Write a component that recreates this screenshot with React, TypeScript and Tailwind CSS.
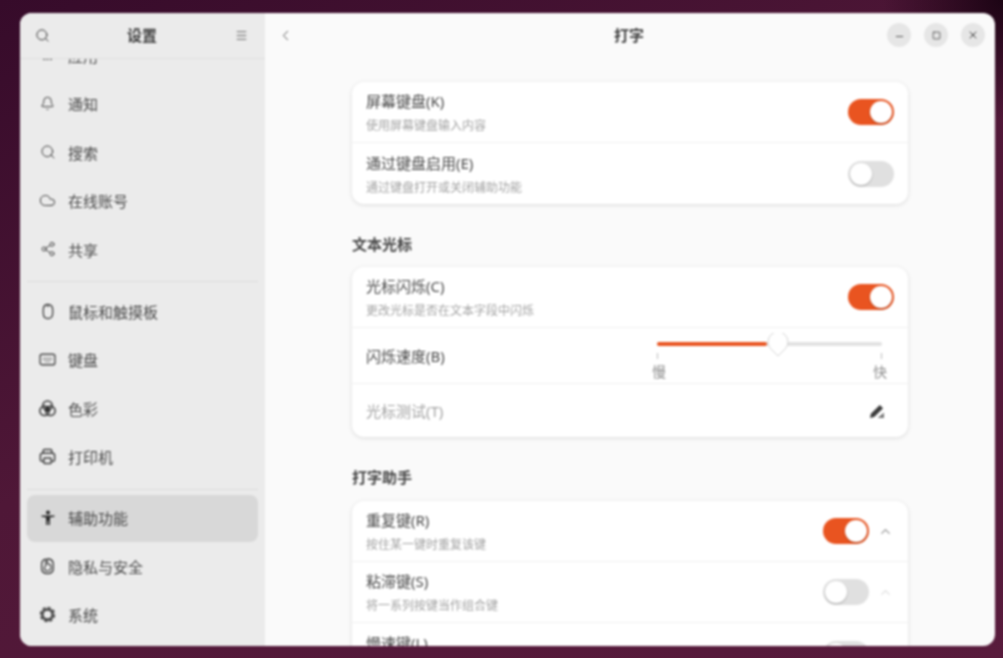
import { Bell, ChevronLeft, ChevronUp, Cloud, Menu, Minus, Search, Share2, Square, X } from "lucide-react";
import type { ReactNode } from "react";

function ColorIcon() {
    return (
        <svg width="17" height="17" viewBox="0 0 16 16" fill="none" stroke="#3d3d3d" strokeWidth="1.5">
            <circle cx="8" cy="5.4" r="4.4" />
            <circle cx="5.2" cy="10.2" r="4.4" />
            <circle cx="10.8" cy="10.2" r="4.4" />
            <path d="M8 5.6l3 2.2-1 3.4H6l-1-3.4z" fill="#333333" stroke="none" />
        </svg>
    );
}

function PersonIcon() {
    return (
        <svg width="16" height="16" viewBox="0 0 16 16" fill="#2a2a2a">
            <circle cx="8" cy="2.6" r="2" />
            <path d="M1.5 5.4h13v1.4L10 7.6V15H8.500v-4h-1v4H6V7.600L1.500 6.800z" />
        </svg>
    );
}

function MouseIcon() {
    return (
        <svg width="16" height="17" viewBox="0 0 16 16" fill="none" stroke="#404040" strokeWidth="1.3">
            <path d="M8 1c-3.2 0-4.700 2.200-4.700 5.200v3.200c0 3.400 1.600 5.600 4.700 5.600s4.700-2.200 4.700-5.600V6.200C12.700 3.200 11.200 1 8 1z" />
            <path d="M8 1v2.500" />
        </svg>
    );
}

function KeyboardIcon() {
    return (
        <svg width="17" height="17" viewBox="0 0 16 16" fill="none" stroke="#484848">
            <rect x="1" y="3" width="14" height="10" rx="2" strokeWidth="1.3" />
            <path d="M3.500 6.500h9M3.500 8.200h9M5.500 10.200h5" stroke="#9a9a9a" strokeWidth="1" />
        </svg>
    );
}

function PrinterIcon() {
    return (
        <svg width="17" height="17" viewBox="0 0 16 16" fill="none" stroke="#404040" strokeWidth="1.4">
            <path d="M4 5V2.500C4 2 4.400 1.500 5 1.500h6c.6 0 1 .5 1 1V5" />
            <path d="M4 12.500H2.800c-.9 0-1.500-.6-1.500-1.500V7c0-1.200.8-2 2-2h9.400c1.200 0 2 .8 2 2v4c0 .9-.6 1.500-1.500 1.500H12" />
            <rect x="4.500" y="9.500" width="7" height="5" rx=".8" />
        </svg>
    );
}

function HandIcon() {
    return (
        <svg width="17" height="18" viewBox="0 0 16 16" fill="none" stroke="#404040" strokeWidth="1.3">
            <path d="M6 1.600C3.800 2.300 2.500 4 2.500 6.500v3.500c0 3.200 2.200 5 5.500 5s5.500-1.800 5.500-5V6.500C13.500 3.500 11.500 1.500 8 1.200" />
            <path d="M6.300 8V2.200c0-1 1.600-1 1.600 0V6c2.200 0 3.400 1.300 3.400 3.200 0 2-1.300 3.300-3.300 3.300-1.700 0-3-1-3-2.600 0-1 .5-1.700 1.300-1.900z" strokeWidth="1.100" />
        </svg>
    );
}

function GearIcon() {
    return (
        <svg width="17" height="17" viewBox="0 0 16 16" fill="none" stroke="#484848">
            <circle cx="8" cy="8" r="4.800" strokeWidth="2.400" />
            <circle cx="8" cy="8" r="6.600" strokeWidth="1.400" strokeDasharray="3.300 1.850" />
        </svg>
    );
}

function TextEditIcon() {
    return (
        <svg width="16" height="16" viewBox="0 0 16 16">
            <path d="M1 15l.9-4.200L10.800 1.900l3.300 3.300L5.200 14.100z" fill="#3a3a3a" />
            <path d="M8.500 15l6.500-5.500V15z" fill="#777777" />
        </svg>
    );
}

function Separator() {
    return <div className="mx-[7px] h-px shrink-0 bg-[#dcdcdc]" />;
}

function NavItem({ icon, label, active }: { icon: ReactNode; label: string; active?: boolean }) {
    return (
        <div className={"mx-[7px] flex h-[47px] shrink-0 items-center rounded-lg pl-[12px] " + (active ? "bg-[#d8d8d8]" : "")}>
            <div className="-mt-[1px] flex w-[17px] justify-center text-[#3d3d3d]">{icon}</div>
            <span className="ml-[12px] text-[15px] leading-[20px] text-[#4a4a4a]">{label}</span>
        </div>
    );
}

function Toggle({ on }: { on?: boolean }) {
    return (
        <div className={"flex h-[26px] w-[46px] shrink-0 items-center rounded-full px-[2px] " + (on ? "justify-end bg-[#e95420]" : "justify-start bg-[#e0e0e0]")}>
            <div className="h-[22px] w-[22px] rounded-full bg-white shadow-[0_1px_2px_rgba(0,0,0,0.25)]" />
        </div>
    );
}

function Row({ title, sub, children, border = true }: { title: string; sub: string; children: ReactNode; border?: boolean }) {
    return (
        <div className={"flex h-[61px] shrink-0 items-center justify-between pl-[14px] pr-[14px] " + (border ? "border-b border-[#f1f1f1]" : "")}>
            <div className="flex flex-col">
                <span className="text-[15px] leading-[22px] text-[#4a4a4a]">{title}</span>
                <span className="mt-[6px] text-[12px] leading-[16px] text-[#a3a3a3]">{sub}</span>
            </div>
            {children}
        </div>
    );
}

function Card({ children }: { children: ReactNode }) {
    return <div className="flex w-[556px] shrink-0 flex-col rounded-xl bg-white shadow-[0_1px_4px_rgba(0,0,0,0.13)]">{children}</div>;
}

function Heading({ children }: { children: ReactNode }) {
    return <div className="w-[556px] text-[15px] font-bold leading-[20px] text-[#454545]">{children}</div>;
}

function WinButton({ children }: { children: ReactNode }) {
    return <div className="flex h-6 w-6 items-center justify-center rounded-full bg-[#e6e6e6] text-[#3d3d3d]">{children}</div>;
}

export default function App() {
    return (
        <div className="h-[658px] w-[1003px] overflow-hidden bg-[radial-gradient(circle_at_100%_0%,#1c0414_0%,#1c041400_10%),linear-gradient(155deg,#360b2a_0%,#4f1737_45%,#581b3c_100%)] pl-[20px] pr-[8px] pt-[13px] pb-[12px] font-['Noto_Sans','Noto_Sans_CJK_SC',sans-serif]">
            <div className="flex h-full overflow-hidden rounded-[12px] bg-[#fafafa] blur-[0.8px]">
                <div className="flex w-[245px] shrink-0 flex-col bg-[#ebebeb]">
                    <div className="z-10 flex h-[46px] shrink-0 items-center justify-between border-b border-[#dedede] bg-[#ebebeb] pl-[15px] pr-[17px]">
                        <Search size={15} strokeWidth={1.6} className="text-[#3d3d3d]" />
                        <span className="-ml-[1px] text-[15px] font-bold text-[#3f3f3f]">设置</span>
                        <Menu size={13} strokeWidth={1.5} className="text-[#4a4a4a]" />
                    </div>
                    <div className="flex flex-col overflow-hidden">
                        <div className="-mt-[27px] flex flex-col gap-[1.5px]">
                            <NavItem icon={<span className="mt-[7px] text-[12px] font-bold leading-[16px]">···</span>} label="应用" />
                            <NavItem icon={<Bell size={15} strokeWidth={1.5} />} label="通知" />
                            <NavItem icon={<Search size={16} strokeWidth={1.5} />} label="搜索" />
                            <NavItem icon={<Cloud size={17} strokeWidth={1.4} />} label="在线账号" />
                            <NavItem icon={<Share2 size={16} strokeWidth={1.4} />} label="共享" />
                            <div className="mt-[6.500px] mb-[4.500px]"><Separator /></div>
                            <NavItem icon={<MouseIcon />} label="鼠标和触摸板" />
                            <NavItem icon={<KeyboardIcon />} label="键盘" />
                            <NavItem icon={<ColorIcon />} label="色彩" />
                            <NavItem icon={<PrinterIcon />} label="打印机" />
                            <div className="mt-[7px] mb-[3px]"><Separator /></div>
                            <NavItem icon={<PersonIcon />} label="辅助功能" active />
                            <NavItem icon={<HandIcon />} label="隐私与安全" />
                            <NavItem icon={<GearIcon />} label="系统" />
                        </div>
                    </div>
                </div>
                <div className="flex min-w-0 flex-1 flex-col">
                    <div className="grid h-[44px] shrink-0 grid-cols-3 items-center pl-[12px] pr-[10px]">
                        <ChevronLeft size={17} strokeWidth={1.3} className="text-[#4a4a4a]" />
                        <span className="pr-[4px] text-center text-[15px] font-bold text-[#3f3f3f]">打字</span>
                        <div className="flex justify-end gap-[13px]">
                            <WinButton><Minus size={11} strokeWidth={1.8} className="mt-[3px]" /></WinButton>
                            <WinButton><Square size={9} strokeWidth={2} /></WinButton>
                            <WinButton><X size={12} strokeWidth={2} /></WinButton>
                        </div>
                    </div>
                    <div className="flex min-h-0 flex-1 flex-col items-center overflow-hidden pt-[25px]">
                        <Card>
                            <Row title="屏幕键盘(K)" sub="使用屏幕键盘输入内容"><Toggle on /></Row>
                            <Row title="通过键盘启用(E)" sub="通过键盘打开或关闭辅助功能" border={false}><Toggle /></Row>
                        </Card>
                        <div className="mt-[30px] mb-[13px]"><Heading>文本光标</Heading></div>
                        <Card>
                            <Row title="光标闪烁(C)" sub="更改光标是否在文本字段中闪烁"><Toggle on /></Row>
                            <div className="flex h-[56px] shrink-0 items-center justify-between border-b border-[#f1f1f1] pl-[14px] pr-[21px]">
                                <span className="text-[15px] leading-[22px] text-[#4a4a4a]">闪烁速度(B)</span>
                                <div className="flex w-[235px] flex-col pt-[11px]">
                                    <div className="relative mx-[5px] flex h-[4px] rounded-full bg-[#e2e2e2]">
                                        <div className="h-full w-[49%] rounded-full bg-[#e95420]" />
                                        <svg className="absolute left-[110px] top-[-9px]" width="22" height="24" viewBox="0 0 22 24">
                                            <path d="M11 23L3.500 15.500A10 10 0 1 1 18.500 15.500z" fill="#ffffff" stroke="#d4d4d4" />
                                        </svg>
                                    </div>
                                    <div className="mx-[5px] mt-[7px] flex justify-between">
                                        <div className="h-[6px] w-px bg-[#bdbdbd]" />
                                        <div className="h-[6px] w-px bg-[#bdbdbd]" />
                                    </div>
                                    <div className="mt-[4px] flex justify-between text-[14px] leading-[18px] text-[#8f8f8f]">
                                        <span>慢</span>
                                        <span>快</span>
                                    </div>
                                </div>
                            </div>
                            <div className="flex h-[53px] shrink-0 items-center justify-between pl-[14px] pr-[23px]">
                                <span className="text-[15px] leading-[22px] text-[#a3a3a3]">光标测试(T)</span>
                                <TextEditIcon />
                            </div>
                        </Card>
                        <div className="mt-[30px] mb-[14px]"><Heading>打字助手</Heading></div>
                        <Card>
                            <Row title="重复键(R)" sub="按住某一键时重复该键">
                                <div className="mr-[1px] flex items-center gap-[9px]">
                                    <Toggle on />
                                    <ChevronUp size={15} strokeWidth={1.7} className="text-[#8f8f8f]" />
                                </div>
                            </Row>
                            <Row title="粘滞键(S)" sub="将一系列按键当作组合键">
                                <div className="mr-[1px] flex items-center gap-[9px]">
                                    <Toggle />
                                    <ChevronUp size={15} strokeWidth={1.7} className="text-[#dcdcdc]" />
                                </div>
                            </Row>
                            <div className="pt-px">
                                <Row title="慢速键(L)" sub="在按键按下和接受之间加入延迟">
                                    <div className="mr-[1px] flex items-center gap-[9px]">
                                        <Toggle />
                                        <ChevronUp size={15} strokeWidth={1.7} className="text-[#dcdcdc]" />
                                    </div>
                                </Row>
                            </div>
                        </Card>
                    </div>
                </div>
            </div>
        </div>
    );
}
